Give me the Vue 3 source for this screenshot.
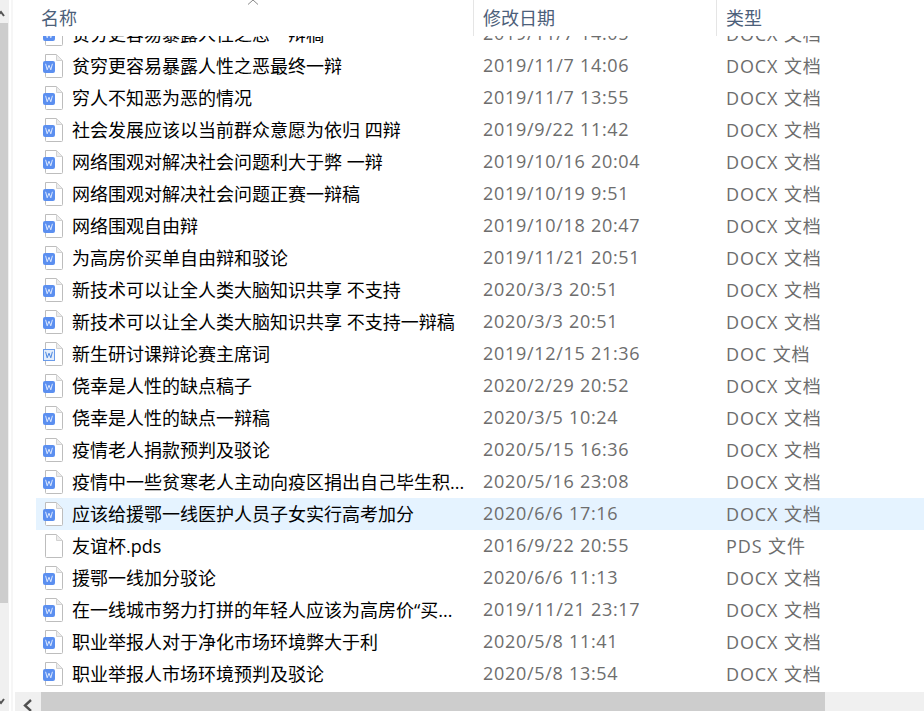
<template>
  <div class="explorer">
    <aside class="side-scroll">
      <div class="side-track">
        <div class="side-arrow">
          <svg width="9" height="23" viewBox="0 0 9 23">
            <path d="M-3 16 L1 12 L4 16" fill="none" stroke="#555" stroke-width="2" />
          </svg>
        </div>
        <div class="side-thumb"></div>
        <div class="side-rest">
          <svg width="9" height="12" viewBox="0 0 9 12">
            <path d="M-3 4 L1 8 L4 4" fill="none" stroke="#555" stroke-width="2" />
          </svg>
        </div>
      </div>
      <div class="side-line"></div>
    </aside>

    <main class="pane">
      <svg class="sort-mark" width="12" height="5" viewBox="0 0 12 5">
        <path d="M1 4.5 L6 0 L11 4.5" fill="none" stroke="#8a8a8a" stroke-width="1" />
      </svg>

      <header class="head">
        <div class="head-cell col-name">名称</div>
        <div class="head-cell col-date">修改日期</div>
        <div class="head-cell col-type">类型</div>
      </header>

      <div class="rows">
        <div class="rows-inner">
          <div
            v-for="file in files"
            :key="file.name + file.date"
            class="row"
            :class="{ selected: file.selected }"
          >
            <div class="col-name name-cell">
              <svg class="file-icon" width="20" height="24" viewBox="0 0 20 24">
                <path d="M2.5 0.5 H13.5 L19.5 6.5 V22.5 Q19.5 23.5 18.5 23.5 H3.5 Q2.5 23.5 2.5 22.5 Z" fill="#fff" stroke="#bdbdbd" />
                <path d="M13.5 0.5 V6.5 H19.5 Z" fill="#ececec" stroke="#d2d2d2" />
                <template v-if="file.icon === 'docx'">
                  <rect x="0" y="7" width="12" height="12" rx="2" fill="#5b8ff0" />
                  <path d="M2.6 9.8 L4.2 15.8 L6 11.2 L7.8 15.8 L9.4 9.8" fill="none" stroke="#dce8ff" stroke-width="1" />
                </template>
                <template v-else-if="file.icon === 'doc'">
                  <rect x="0.5" y="7.5" width="11" height="11" fill="#e3edfb" stroke="#6a9bea" />
                  <path d="M2.6 9.8 L4.2 15.8 L6 11.2 L7.8 15.8 L9.4 9.8" fill="none" stroke="#4a86e0" stroke-width="1" />
                </template>
              </svg>
              <span class="name-text">{{ file.name }}</span>
            </div>
            <div class="col-date cell date-cell">{{ file.date }}</div>
            <div class="col-type cell type-cell">{{ file.type }}</div>
          </div>
        </div>
      </div>

      <footer class="h-scroll">
        <svg class="h-arrow" width="10" height="13" viewBox="0 0 10 13">
          <path d="M8 1 L2 6.5 L8 12" fill="none" stroke="#505050" stroke-width="2.4" />
        </svg>
        <div class="h-thumb"></div>
      </footer>
    </main>
  </div>
</template>

<script setup>
const DOCX = 'DOCX 文档'

const files = [
  { name: '贫穷更容易暴露人性之恶一辩稿', date: '2019/11/7 14:05', type: DOCX, icon: 'docx' },
  { name: '贫穷更容易暴露人性之恶最终一辩', date: '2019/11/7 14:06', type: DOCX, icon: 'docx' },
  { name: '穷人不知恶为恶的情况', date: '2019/11/7 13:55', type: DOCX, icon: 'docx' },
  { name: '社会发展应该以当前群众意愿为依归 四辩', date: '2019/9/22 11:42', type: DOCX, icon: 'docx' },
  { name: '网络围观对解决社会问题利大于弊 一辩', date: '2019/10/16 20:04', type: DOCX, icon: 'docx' },
  { name: '网络围观对解决社会问题正赛一辩稿', date: '2019/10/19 9:51', type: DOCX, icon: 'docx' },
  { name: '网络围观自由辩', date: '2019/10/18 20:47', type: DOCX, icon: 'docx' },
  { name: '为高房价买单自由辩和驳论', date: '2019/11/21 20:51', type: DOCX, icon: 'docx' },
  { name: '新技术可以让全人类大脑知识共享 不支持', date: '2020/3/3 20:51', type: DOCX, icon: 'docx' },
  { name: '新技术可以让全人类大脑知识共享 不支持一辩稿', date: '2020/3/3 20:51', type: DOCX, icon: 'docx' },
  { name: '新生研讨课辩论赛主席词', date: '2019/12/15 21:36', type: 'DOC 文档', icon: 'doc' },
  { name: '侥幸是人性的缺点稿子', date: '2020/2/29 20:52', type: DOCX, icon: 'docx' },
  { name: '侥幸是人性的缺点一辩稿', date: '2020/3/5 10:24', type: DOCX, icon: 'docx' },
  { name: '疫情老人捐款预判及驳论', date: '2020/5/15 16:36', type: DOCX, icon: 'docx' },
  { name: '疫情中一些贫寒老人主动向疫区捐出自己毕生积...', date: '2020/5/16 23:08', type: DOCX, icon: 'docx' },
  { name: '应该给援鄂一线医护人员子女实行高考加分', date: '2020/6/6 17:16', type: DOCX, icon: 'docx', selected: true },
  { name: '友谊杯.pds', date: '2016/9/22 20:55', type: 'PDS 文件', icon: 'blank' },
  { name: '援鄂一线加分驳论', date: '2020/6/6 11:13', type: DOCX, icon: 'docx' },
  { name: '在一线城市努力打拼的年轻人应该为高房价“买...', date: '2019/11/21 23:17', type: DOCX, icon: 'docx' },
  { name: '职业举报人对于净化市场环境弊大于利', date: '2020/5/8 11:41', type: DOCX, icon: 'docx' },
  { name: '职业举报人市场环境预判及驳论', date: '2020/5/8 13:54', type: DOCX, icon: 'docx' },
]
</script>

<style>
html, body { margin: 0; background: #fff; overflow: hidden; }
</style>

<style scoped>
.explorer {
  width: 924px;
  height: 711px;
  display: flex;
  overflow: hidden;
  font-family: "Open Sans", "Noto Sans CJK SC", sans-serif;
  font-size: 18px;
  background: #fff;
}

.side-scroll {
  width: 15px;
  flex-shrink: 0;
  display: flex;
}

.side-track {
  width: 9px;
  display: flex;
  flex-direction: column;
  background: #f0f0f0;
}

.side-arrow {
  height: 23px;
  overflow: hidden;
}

.side-arrow svg,
.side-rest svg { display: block; }

.side-thumb {
  width: 8px;
  height: 580px;
  background: #cdcdcd;
}

.side-rest {
  flex: 1;
  display: flex;
  align-items: flex-end;
  padding-bottom: 4px;
}

.side-line {
  width: 2px;
  margin-left: 2px;
  background: #f6f6f6;
}

.pane {
  flex: 1;
  position: relative;
  display: flex;
  flex-direction: column;
  min-width: 0;
}

.sort-mark {
  position: absolute;
  left: 232px;
  top: 0;
}

.head {
  height: 36px;
  display: flex;
  flex-shrink: 0;
  padding-left: 21px;
  background: #fff;
}

.head-cell {
  display: flex;
  align-items: center;
  padding-bottom: 2px;
  color: #4c607a;
}

.col-name { width: 437px; flex-shrink: 0; padding-left: 5px; box-sizing: border-box; }
.col-date { width: 243px; flex-shrink: 0; padding-left: 10px; box-sizing: border-box; }
.col-type { flex: 1; padding-left: 10px; box-sizing: border-box; }

.head .col-date,
.head .col-type { border-left: 1px solid #e5e5e5; padding-left: 9px; }

.rows {
  flex: 1;
  overflow: hidden;
  min-height: 0;
}

.rows-inner { margin-top: -18px; }

.row {
  height: 32px;
  display: flex;
  align-items: center;
  margin-left: 21px;
}

.row.selected { background: #e5f3ff; }

.name-cell {
  display: flex;
  align-items: center;
  gap: 9px;
  padding-left: 7px;
  color: #000;
}

.file-icon { flex-shrink: 0; }

.name-text {
  white-space: nowrap;
  padding-bottom: 2px;
}

.cell {
  color: #6d6d6d;
  white-space: nowrap;
  padding-bottom: 2px;
}

.date-cell { letter-spacing: 0.7px; }
.type-cell { letter-spacing: 0.9px; }

.h-scroll {
  height: 19px;
  flex-shrink: 0;
  display: flex;
  background: #f0f0f0;
}

.h-arrow { margin: 7px 0 0 8px; }

.h-thumb {
  width: 784px;
  margin-left: 8px;
  background: #cdcdcd;
}
</style>
